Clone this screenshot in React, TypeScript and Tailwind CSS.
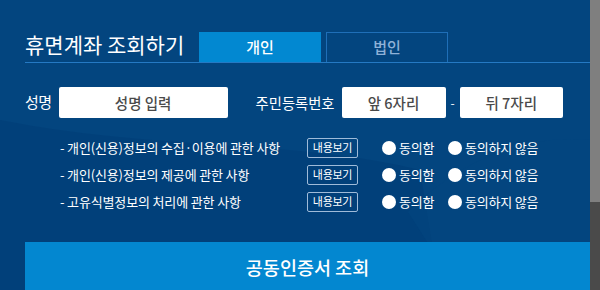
const font = { fontFamily: '"Noto Sans CJK KR", "Noto Sans", sans-serif' };

const terms = [
  "- 개인(신용)정보의 수집·이용에 관한 사항",
  "- 개인(신용)정보의 제공에 관한 사항",
  "- 고유식별정보의 처리에 관한 사항",
];

function Radio({ label }: { label: string }) {
  return (
    <label className="flex items-center gap-[3px] text-[13px] tracking-[-0.2px] text-white">
      <span className="h-[14px] w-[14px] rounded-full bg-white" />
      {label}
    </label>
  );
}

export default function App() {
  return (
    <div className="flex h-[290px] w-[600px] overflow-hidden" style={font}>
      <div className="relative w-[590px] bg-[#03457f] pl-[25px]">
        {/* background shading */}
        <svg className="pointer-events-none absolute inset-0" width="590" height="290">
          <path d="M0 120 C 150 150 300 140 420 170 L 440 290 L 0 290 Z" fill="#003c75" opacity="0.5" />
          <path d="M408 212 L 440 262 L 590 262 L 590 140 C 540 135 470 150 408 212 Z" fill="#03457f" opacity="0.5" />
        </svg>

        <div className="relative">
          {/* header */}
          <div className="mt-[32px] flex items-end border-b border-[#2579c3]">
            <h1 className="w-[174px] pb-[6px] text-[21px] leading-[24px] text-white">휴면계좌 조회하기</h1>
            <button className="h-[30px] w-[122px] bg-[#0288d1] text-[15px] font-medium text-white">개인</button>
            <button className="ml-[5px] h-[30px] w-[122px] border border-b-0 border-[#1f6fb8] text-[15px] font-medium text-[#8fb2d8]">법인</button>
          </div>

          {/* inputs */}
          <div className="mt-[24px] flex items-center">
            <span className="text-[15px] tracking-[-0.5px] text-white">성명</span>
            <div className="ml-[7px] flex h-[31px] w-[169px] items-center justify-center rounded-[2px] bg-white text-[14.5px] font-medium text-[#4a4a4a]">성명 입력</div>
            <span className="ml-[28px] text-[14.3px] text-white">주민등록번호</span>
            <div className="ml-[7px] flex h-[31px] w-[104px] items-center justify-center rounded-[2px] bg-white text-[14.5px] font-medium text-[#4a4a4a]">앞 6자리</div>
            <span className="mx-[5px] text-[12px] text-white">-</span>
            <div className="flex h-[31px] w-[103px] items-center justify-center rounded-[2px] bg-white text-[14.5px] font-medium text-[#4a4a4a]">뒤 7자리</div>
          </div>

          {/* terms */}
          <div className="mt-[16px] flex flex-col">
            {terms.map((t) => (
              <div key={t} className="flex h-[27px] items-center">
                <span className="w-[282px] pl-[35px] text-[13px] tracking-[-0.15px] text-white">{t}</span>
                <button className="flex h-[20px] w-[51px] items-center justify-center rounded-[2px] border border-[#9fbbd9] text-[11px] tracking-[-0.3px] text-white">내용보기</button>
                <div className="ml-[24px] w-[66px]">
                  <Radio label="동의함" />
                </div>
                <Radio label="동의하지 않음" />
              </div>
            ))}
          </div>

          {/* submit */}
          <button className="mt-[27px] flex h-[52px] w-[565px] items-center justify-center bg-[#0387d0] text-[18.5px] font-medium text-white">공동인증서 조회</button>
        </div>
      </div>
      <div className="flex w-[10px] flex-col">
        <div className="h-[202px] bg-[#7f7f7f]" />
        <div className="flex-1 bg-[#4a4a4a]" />
      </div>
    </div>
  );
}
